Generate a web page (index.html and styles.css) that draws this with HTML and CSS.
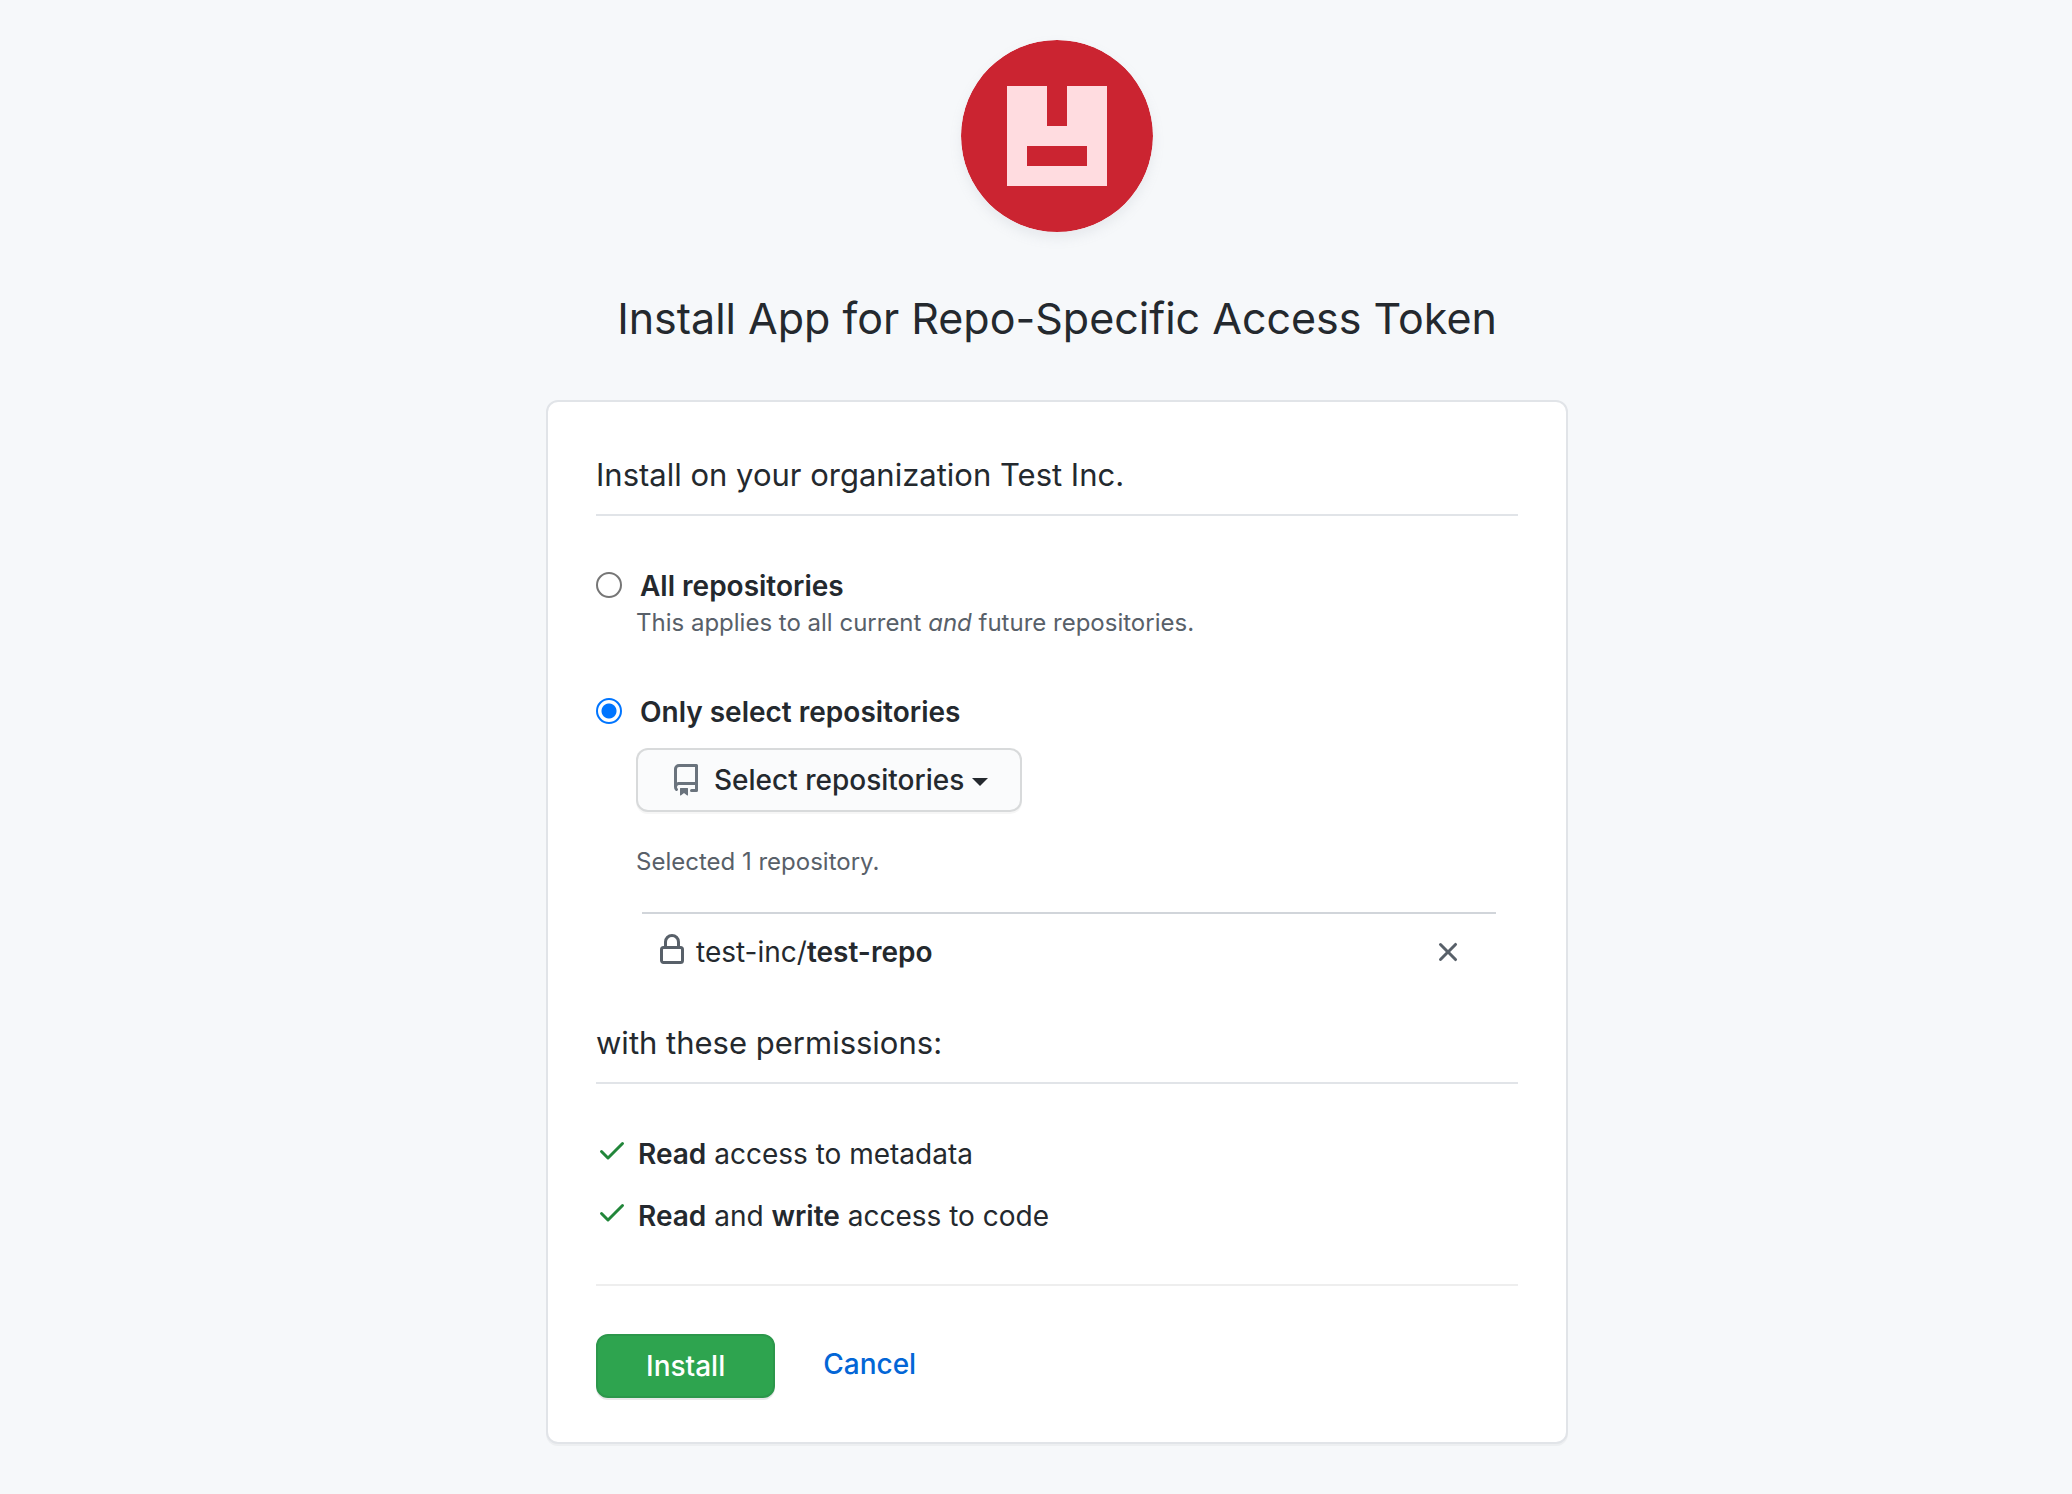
FILE: index.html
```html
<!DOCTYPE html>
<html lang="en">
<head>
<meta charset="utf-8">
<meta name="viewport" content="width=device-width, initial-scale=1">
<title>Install App for Repo-Specific Access Token</title>
<link rel="stylesheet" href="styles.css">
</head>
<body>
<main class="page">
  <svg class="app-logo" viewBox="0 0 192 192" role="img" aria-label="App logo">
    <circle cx="96" cy="96" r="96" fill="#cb2431"/>
    <path fill="#ffdce0" fill-rule="evenodd" d="M46 46h40v40h20V46h40v100H46zM66 106v20h60v-20z"/>
  </svg>
  <h1 class="title">Install App for Repo-Specific Access Token</h1>

  <form class="card">
    <h2 class="section-title">Install on your organization Test Inc.</h2>

    <div class="option">
      <input class="radio" type="radio" name="target" id="all">
      <label class="option-label" for="all">All repositories</label>
    </div>
    <p class="note">This applies to all current <em>and</em> future repositories.</p>

    <div class="option option-second">
      <input class="radio" type="radio" name="target" id="selected" checked>
      <label class="option-label" for="selected">Only select repositories</label>
    </div>
    <div class="selection">
      <button class="picker" type="button">
        <svg class="icon icon-repo" viewBox="0 0 16 16" aria-hidden="true"><path fill-rule="evenodd" d="M2 2.5A2.5 2.5 0 014.5 0h8.75a.75.75 0 01.75.75v12.5a.75.75 0 01-.75.75h-2.5a.75.75 0 110-1.5h1.75v-2h-8a1 1 0 00-.714 1.7.75.75 0 01-1.072 1.05A2.495 2.495 0 012 11.5v-9zm10.5-1V9h-8c-.356 0-.694.074-1 .208V2.5a1 1 0 011-1h8zM5 12.25v3.25a.25.25 0 00.4.2l1.45-1.087a.25.25 0 01.3 0L8.6 15.7a.25.25 0 00.4-.2v-3.25a.25.25 0 00-.25-.25h-3.5a.25.25 0 00-.25.25z"/></svg>
        <span>Select repositories</span>
        <svg class="caret" viewBox="0 0 16 12" aria-hidden="true"><path d="M0 4h16l-8 8z"/></svg>
      </button>
      <p class="selected-count">Selected 1 repository.</p>
      <ul class="repo-list">
        <li class="repo">
          <svg class="icon icon-lock" viewBox="0 0 16 16" aria-hidden="true"><path fill-rule="evenodd" d="M4 4v2h-.25A1.75 1.75 0 002 7.75v5.5c0 .966.784 1.75 1.75 1.75h8.5A1.75 1.75 0 0014 13.25v-5.5A1.75 1.75 0 0012.25 6H12V4a4 4 0 10-8 0zm6.5 2V4a2.5 2.5 0 10-5 0v2h5zM12 7.5h.25a.25.25 0 01.25.25v5.5a.25.25 0 01-.25.25h-8.5a.25.25 0 01-.25-.25v-5.5a.25.25 0 01.25-.25H12z"/></svg>
          <span class="repo-name">test-inc/<strong>test-repo</strong></span>
          <button class="remove" type="button" aria-label="Remove test-inc/test-repo">
            <svg class="icon" viewBox="0 0 16 16" aria-hidden="true"><path fill-rule="evenodd" d="M3.72 3.72a.75.75 0 011.06 0L8 6.94l3.22-3.22a.75.75 0 111.06 1.06L9.06 8l3.22 3.22a.75.75 0 11-1.06 1.06L8 9.06l-3.22 3.22a.75.75 0 01-1.06-1.06L6.94 8 3.72 4.78a.75.75 0 010-1.06z"/></svg>
          </button>
        </li>
      </ul>
    </div>

    <h2 class="section-title">with these permissions:</h2>
    <ul class="permissions">
      <li class="permission">
        <svg class="icon icon-check" viewBox="0 0 16 16" aria-hidden="true"><path fill-rule="evenodd" d="M13.78 4.22a.75.75 0 010 1.06l-7.25 7.25a.75.75 0 01-1.06 0L2.22 9.28a.75.75 0 011.06-1.06L6 10.94l6.72-6.72a.75.75 0 011.06 0z"/></svg>
        <span><strong>Read</strong> access to metadata</span>
      </li>
      <li class="permission">
        <svg class="icon icon-check" viewBox="0 0 16 16" aria-hidden="true"><path fill-rule="evenodd" d="M13.78 4.22a.75.75 0 010 1.06l-7.25 7.25a.75.75 0 01-1.06 0L2.22 9.28a.75.75 0 011.06-1.06L6 10.94l6.72-6.72a.75.75 0 011.06 0z"/></svg>
        <span><strong>Read</strong> and <strong>write</strong> access to code</span>
      </li>
    </ul>

    <div class="actions">
      <button class="install" type="submit">Install</button>
      <a class="cancel" href="#">Cancel</a>
    </div>
  </form>
</main>
</body>
</html>
```
FILE: styles.css
```css
* {
  box-sizing: border-box;
}

body {
  margin: 0;
  background: #f6f8fa;
  color: #24292e;
  font: 400 28px/40px Inter, "Liberation Sans", sans-serif;
}

h1, h2, p, ul {
  margin: 0;
  padding: 0;
  font-weight: 400;
  list-style: none;
}

button {
  font: inherit;
  cursor: pointer;
}

strong {
  font-weight: 600;
}

.page {
  display: flex;
  flex-direction: column;
  align-items: center;
  padding: 40px 0 48px 42px;
}

.app-logo {
  width: 192px;
  height: 192px;
  border-radius: 50%;
  box-shadow: 0 6px 12px rgba(149, 157, 165, 0.15);
}

.title {
  margin: 56px 0 52px;
  font-size: 43px;
  line-height: 60px;
  text-align: center;
}

.card {
  width: 100%;
  max-width: 1022px;
  padding: 48px 48px 44px;
  background: #fff;
  border: 2px solid #e1e4e8;
  border-radius: 12px;
  box-shadow: 0 2px 0 rgba(27, 31, 35, 0.04);
}

.section-title {
  margin-bottom: 50px;
  padding-bottom: 14px;
  border-bottom: 2px solid #e1e4e8;
  font-size: 31px;
  line-height: 50px;
}

.option {
  display: flex;
  align-items: center;
  gap: 18px;
}

.option-second {
  margin-top: 52px;
}

.option-label {
  font-weight: 600;
}

.radio {
  appearance: none;
  flex: none;
  width: 26px;
  height: 26px;
  margin: 0 0 2px;
  border: 2px solid #767676;
  border-radius: 50%;
  background: #fff;
}

.radio:checked {
  border-color: #0075ff;
  background: radial-gradient(circle, #0075ff 7px, #fff 8px);
}

.note,
.selected-count {
  color: #586069;
  font-size: 24px;
  line-height: 34px;
}

.note {
  padding-left: 40px;
}

.selection {
  padding: 16px 22px 28px 40px;
}

.picker {
  display: flex;
  align-items: center;
  height: 64px;
  padding: 0 32px;
  background: #fafbfc;
  border: 2px solid rgba(27, 31, 35, 0.15);
  border-radius: 12px;
  box-shadow: 0 2px 0 rgba(27, 31, 35, 0.04);
  color: #24292e;
  font-weight: 500;
}

.icon {
  display: block;
  flex: none;
  width: 32px;
  height: 32px;
  fill: #586069;
}

.icon-repo {
  margin-right: 12px;
  fill: #6a737d;
}

.caret {
  width: 16px;
  height: 12px;
  margin-left: 8px;
  fill: #24292e;
}

.selected-count {
  margin: 33px 0;
}

.repo-list {
  margin-left: 6px;
}

.repo {
  display: flex;
  align-items: center;
  gap: 8px;
  height: 78px;
  padding: 0 32px 0 14px;
  border-top: 2px solid #d1d5da;
}

.icon-lock {
  margin-bottom: 4px;
}

.remove {
  margin-left: auto;
  padding: 0;
  background: none;
  border: 0;
}

.permissions {
  display: grid;
  gap: 22px;
  padding-bottom: 48px;
  border-bottom: 2px solid #eee;
}

.permission {
  display: flex;
  align-items: flex-start;
  gap: 10px;
}

.icon-check {
  fill: #22863a;
}

.actions {
  display: flex;
  align-items: flex-start;
  gap: 48px;
  padding-top: 48px;
}

.install {
  height: 64px;
  padding: 0 48px;
  background: #2ea44f;
  border: 2px solid #2c974b;
  border-radius: 12px;
  box-shadow: 0 2px 0 rgba(27, 31, 35, 0.1);
  color: #fff;
  font-weight: 500;
}

.cancel {
  color: #0366d6;
  font-weight: 500;
  line-height: 60px;
  text-decoration: none;
}
```
